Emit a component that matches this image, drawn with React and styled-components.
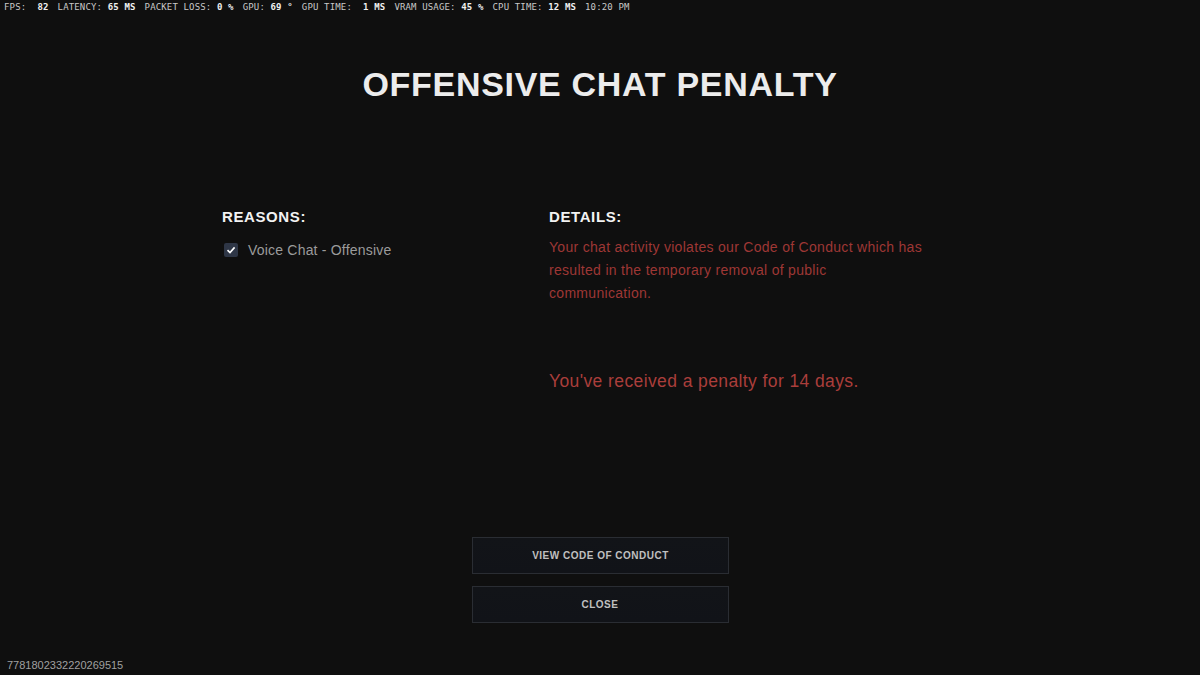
import React from "react";
import styled, { createGlobalStyle } from "styled-components";

const Global = createGlobalStyle`
  html, body {
    margin: 0;
    padding: 0;
    background: #0f0f0f;
  }
  body {
    font-family: "Liberation Sans", "DejaVu Sans", sans-serif;
  }
`;

const Page = styled.div`
  position: relative;
  width: 1200px;
  height: 675px;
  background: #0f0f0f;
  display: flex;
  flex-direction: column;
  overflow: hidden;
`;

const StatsBar = styled.div`
  display: flex;
  gap: 9px;
  padding: 1px 0 0 4px;
  height: 14px;
  font-family: "DejaVu Sans Mono", "Liberation Mono", monospace;
  font-size: 9px;
  line-height: 12px;
  letter-spacing: 0.15px;
  color: #c8c8c8;
  white-space: pre;
`;

const Stat = styled.span`
  & b {
    color: #f0f0f0;
    font-weight: 700;
  }
`;

const Title = styled.h1`
  margin: 49px 0 0;
  text-align: center;
  font-size: 34px;
  line-height: 40px;
  font-weight: 700;
  letter-spacing: 0.7px;
  color: #ececec;
`;

const Columns = styled.div`
  display: grid;
  grid-template-columns: 327px 1fr;
  width: 756px;
  margin: 104px auto 0;
`;

const Heading = styled.h2`
  margin: 0;
  font-size: 15px;
  line-height: 18px;
  font-weight: 700;
  letter-spacing: 0.6px;
  color: #f2f2f2;
`;

const ReasonRow = styled.div`
  display: flex;
  align-items: center;
  gap: 10px;
  margin-top: 16px;
  padding-left: 2px;
  font-size: 14px;
  letter-spacing: 0.2px;
  color: #9b9b9b;
`;

const Check = styled.span`
  display: inline-flex;
  align-items: center;
  justify-content: center;
  width: 14px;
  height: 14px;
  border-radius: 2px;
  background: #2e3646;
`;

const Paragraph = styled.p`
  margin: 10px 0 0;
  width: 376px;
  font-size: 14px;
  line-height: 23px;
  letter-spacing: 0.3px;
  color: #9e3735;
`;

const Penalty = styled.p`
  margin: 65px 0 0;
  font-size: 17.5px;
  line-height: 22px;
  letter-spacing: 0.4px;
  color: #aa3e3b;
`;

const Buttons = styled.div`
  display: flex;
  flex-direction: column;
  align-items: center;
  gap: 12px;
  margin-top: auto;
  margin-bottom: 52px;
`;

const Button = styled.button`
  width: 257px;
  height: 37px;
  margin-left: ${(p) => p.$shift || "0px"};
  border: 1px solid #2a2d33;
  background: linear-gradient(180deg, #121418 0%, #111318 100%);
  color: #c0c0c0;
  font-family: "Liberation Sans", "DejaVu Sans", sans-serif;
  font-size: 10px;
  font-weight: 700;
  letter-spacing: 0.5px;
  cursor: pointer;
`;

const SessionId = styled.div`
  position: absolute;
  left: 7px;
  bottom: 4px;
  font-size: 11px;
  color: #a0a0a0;
`;

const stats = [
  ["FPS:", " 82"],
  ["LATENCY:", "65 MS"],
  ["PACKET LOSS:", "0 %"],
  ["GPU:", "69 °"],
  ["GPU TIME:", " 1 MS"],
  ["VRAM USAGE:", "45 %"],
  ["CPU TIME:", "12 MS"],
];

export default function App() {
  return (
    <Page>
      <Global />
      <StatsBar>
        {stats.map(([label, value]) => (
          <Stat key={label}>
            {label} <b>{value}</b>
          </Stat>
        ))}
        <Stat>10:20 PM</Stat>
      </StatsBar>
      <Title>OFFENSIVE CHAT PENALTY</Title>
      <Columns>
        <div>
          <Heading>REASONS:</Heading>
          <ReasonRow>
            <Check>
              <svg width="10" height="10" viewBox="0 0 10 10">
                <path d="M1.5 5.2 L4 7.6 L8.6 2.4" fill="none" stroke="#ffffff" strokeWidth="1.6" />
              </svg>
            </Check>
            Voice Chat - Offensive
          </ReasonRow>
        </div>
        <div>
          <Heading>DETAILS:</Heading>
          <Paragraph>
            Your chat activity violates our Code of Conduct which has resulted in the temporary removal of public communication.
          </Paragraph>
          <Penalty>You've received a penalty for 14 days.</Penalty>
        </div>
      </Columns>
      <Buttons>
        <Button $shift="1px">VIEW CODE OF CONDUCT</Button>
        <Button>CLOSE</Button>
      </Buttons>
      <SessionId>7781802332220269515</SessionId>
    </Page>
  );
}
